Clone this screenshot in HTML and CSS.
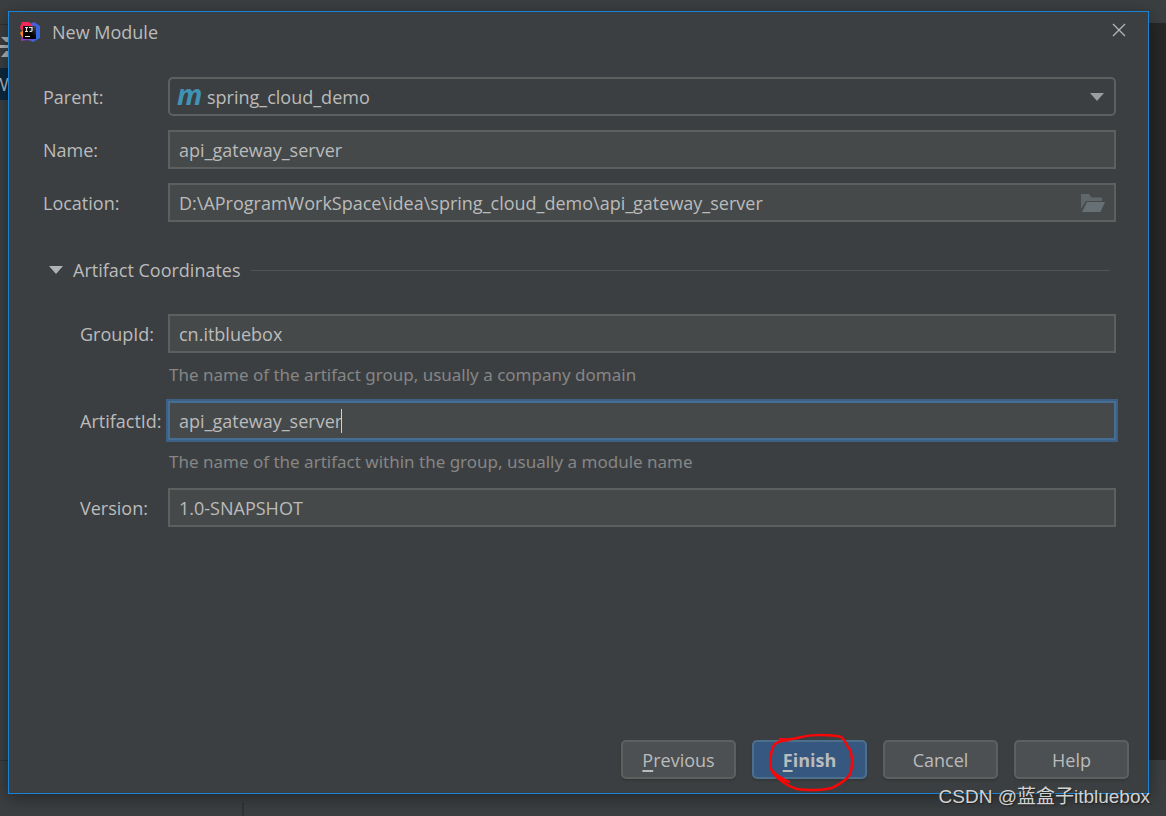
FILE: index.html
```html
<!DOCTYPE html>
<html lang="en">
<head>
<meta charset="utf-8">
<title>New Module</title>
<link rel="stylesheet" href="styles.css">
</head>
<body>
<div class="ide" aria-hidden="true">
  <div class="ide-left">
    <svg class="collapse" width="10" height="20" viewBox="0 0 10 20"><path d="M1 0h9v5H6zM0 8h10v3H0zM6 14h4v6H1z" fill="#afb1b3"/></svg>
    <span class="ide-row">W</span>
  </div>
  <div class="ide-editor"></div>
  <div class="ide-split"></div>
</div>
<form class="dialog">
  <header class="titlebar">
    <svg class="logo" width="20" height="20" viewBox="0 0 20 20">
      <defs>
        <linearGradient id="blue" x1="0" y1="0" x2="1" y2="1"><stop offset="0" stop-color="#6a55e0"/><stop offset=".4" stop-color="#3b62e0"/><stop offset="1" stop-color="#2f6de0"/></linearGradient>
        <linearGradient id="violet" x1="0" y1="0" x2="1" y2="0"><stop offset="0" stop-color="#a035b8"/><stop offset="1" stop-color="#5a50e0"/></linearGradient>
        <linearGradient id="plate" x1="0" y1="1" x2="1" y2="0"><stop offset=".5" stop-color="#000"/><stop offset="1" stop-color="#4a4a50"/></linearGradient>
      </defs>
      <path d="M10 2l4-2 6 4v12l-7 4-5-3z" fill="url(#blue)"/>
      <path d="M2 13l-1 6 6-1 5 1 3-4z" fill="url(#violet)"/>
      <path d="M0 11l4-4 1 8-3 0z" fill="#fc801d"/>
      <path d="M2 0l7 0 4 4-8 5-4-1-1-3z" fill="#f02a58"/>
      <path d="M3 4h13v13H3z" fill="url(#plate)"/>
      <path d="M5 5.500h3M6.500 5.500v4M5 9.500h3M9 5.500h3v3q0 1-2.500 1M5 14.500h5" fill="none" stroke="#e4e4e4" stroke-width="1.200"/>
    </svg>
    <h1 class="title">New Module</h1>
    <button class="close" type="button" aria-label="Close"><svg width="14" height="14" viewBox="0 0 14 14"><path d="M1 1l12 12M13 1L1 13" stroke="#b4b6b8" stroke-width="1.300"/></svg></button>
  </header>
  <main class="content">
    <div class="grid">
      <label for="parent">Parent:</label>
      <div class="field">
        <span class="maven" aria-hidden="true">m</span>
        <select id="parent" class="box combo"><option>spring_cloud_demo</option></select>
        <svg class="arrow" width="14" height="8" viewBox="0 0 14 8"><path d="M0 0h14L7 8z" fill="#9b9d9f"/></svg>
      </div>
      <label for="name">Name:</label>
      <div class="field"><input id="name" class="box" type="text" value="api_gateway_server"></div>
      <label for="location">Location:</label>
      <div class="field">
        <input id="location" class="box" type="text" value="D:\AProgramWorkSpace\idea\spring_cloud_demo\api_gateway_server">
        <button class="browse" type="button" aria-label="Browse"><svg width="24" height="18" viewBox="0 0 24 18"><path d="M0 0h8l2.500 3.500H21V7H5L0 15z" fill="#5f676b"/><path d="M6 8h18l-4.500 10H1z" fill="#667075"/></svg></button>
      </div>
    </div>
    <h2 class="section">
      <button class="toggle" type="button" aria-expanded="true"><svg width="14" height="8" viewBox="0 0 14 8"><path d="M0 0h14L7 8z" fill="#b0b2b4"/></svg>Artifact Coordinates</button>
    </h2>
    <div class="grid coords">
      <label for="group">GroupId:</label>
      <div class="field"><input id="group" class="box" type="text" value="cn.itbluebox"></div>
      <p class="hint">The name of the artifact group, usually a company domain</p>
      <label for="artifact">ArtifactId:</label>
      <div class="field"><input id="artifact" class="box active" type="text" value="api_gateway_server"><span class="caret"></span></div>
      <p class="hint">The name of the artifact within the group, usually a module name</p>
      <label for="version">Version:</label>
      <div class="field"><input id="version" class="box" type="text" value="1.0-SNAPSHOT"></div>
    </div>
  </main>
  <footer class="actions">
    <button class="btn" type="button"><span><u>P</u>revious</span></button>
    <button class="btn primary" type="button"><span><u>F</u>inish</span>
      <svg class="mark" width="90" height="62" viewBox="0 0 90 62"><path d="M23 7C18 8 13 7 8 12C5 18 4 28 5 36C8 43 18 52 31 56C42 58 58 57 66 55C74 51 84 45 85 38C87 29 86 18 82 14C79 8 77 5 75 4C62 1 42 2 36 4C30 5 22 8 14 6M8 40C14 44 18 47 23 49M7 38C10 45 16 47 21 48" fill="none" stroke="#fb0606" stroke-width="2.500" stroke-linecap="round" stroke-linejoin="round"/></svg>
    </button>
    <button class="btn" type="button">Cancel</button>
    <button class="btn" type="button">Help</button>
  </footer>
</form>
<div class="watermark">CSDN @蓝盒子itbluebox</div>
</body>
</html>
```
FILE: styles.css
```css
* { box-sizing: border-box; }

body {
  margin: 0;
  min-height: 100vh;
  padding: 11px 17px 22px 8px;
  display: flex;
  position: relative;
  overflow: hidden;
  background: #3c3f41;
  color: #bbbbbb;
  font: 18px/24px "Open Sans", "Noto Sans CJK SC", sans-serif;
}

button, input, select { font: inherit; color: inherit; }
h1, h2, p { margin: 0; font-size: inherit; font-weight: normal; }

/* IDE window behind the dialog */
.ide { position: absolute; inset: 0; }
.ide-left {
  position: absolute;
  top: 24px;
  bottom: 55px;
  left: 0;
  width: 40px;
  border: solid #2f3133;
  border-width: 1px 0;
}
.collapse { display: block; margin: 12px 0 11px; }
.ide-row { display: block; height: 32px; background: #0d293e; line-height: 32px; text-indent: -8px; }
.ide-editor { position: absolute; top: 23px; right: 0; bottom: 56px; width: 40px; background: #272727; }
.ide-split { position: absolute; left: 242px; bottom: 0; width: 2px; height: 13px; background: #323232; }

.dialog {
  position: relative;
  flex: 1;
  display: flex;
  flex-direction: column;
  border: 1px solid #1883d7;
  background: #3c3f41;
  box-shadow: 0 4px 16px rgba(0, 0, 0, .4);
}

.titlebar { display: flex; align-items: center; height: 40px; padding: 0 22px 0 11px; }
.title { flex: 1; margin-left: 12px; }
.close { display: flex; padding: 0 0 4px; border: 0; background: none; }

.content { flex: 1; padding: 25px 32px 0 34px; }
.grid { display: grid; grid-template-columns: 125px 1fr; row-gap: 14px; align-items: center; }

.field { position: relative; display: flex; }
.box {
  flex: 1;
  min-width: 0;
  height: 39px;
  padding: 0 9px;
  border: 2px solid #5e6060;
  border-radius: 0;
  outline: 0;
  background: #45494a;
}
.combo { appearance: none; padding-left: 37px; border-radius: 5px; background: #3c3f41; }
.maven {
  position: absolute;
  left: 9px;
  top: 3px;
  color: #3f93b5;
  font: italic bold 28px/28px "Open Sans", sans-serif;
}
.arrow { position: absolute; right: 12px; top: 16px; pointer-events: none; }
.browse { position: absolute; right: 11px; top: 11px; display: flex; padding: 0; border: 0; background: none; }

.active { border-color: #466d94; box-shadow: 0 0 0 2px #3d6185; }
.caret { position: absolute; left: 173px; top: 8px; width: 1px; height: 24px; background: #d0d0d0; }

.section { display: flex; align-items: center; gap: 10px; margin: 36px 6px 32px; }
.section::after { content: ""; flex: 1; height: 1px; background: #515355; }
.toggle { display: flex; align-items: center; gap: 10px; padding: 0; border: 0; background: none; }

.coords { row-gap: 0; }
.coords label { padding-left: 37px; }
.hint {
  grid-column: 2;
  padding: 10px 1px 14px;
  color: #868686;
  font-family: "Noto Sans", sans-serif;
  font-size: 17px;
}

.actions { display: flex; justify-content: flex-end; gap: 16px; padding: 0 19px 14px; }
.btn {
  position: relative;
  width: 115px;
  height: 39px;
  padding: 0;
  border: 2px solid #5e6060;
  border-radius: 5px;
  background: #4c5052;
  box-shadow: 0 2px 2px rgba(0, 0, 0, .12);
}
.btn u { text-underline-offset: 3px; text-decoration-thickness: 2px; text-decoration-skip-ink: none; }
.primary { border-color: #4c708c; background: #365880; font-weight: bold; }
.mark { position: absolute; left: 12px; top: -9px; }

.watermark {
  position: absolute;
  right: 16px;
  bottom: 7px;
  color: #d2d2d2;
  font: 19px/24px "Liberation Sans", "Noto Sans CJK SC", sans-serif;
  text-shadow: 1px 1px 1px #222222;
}
```
